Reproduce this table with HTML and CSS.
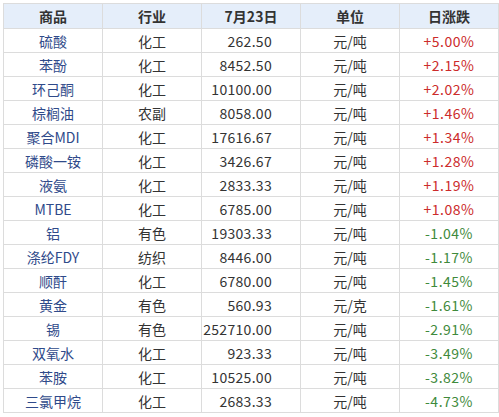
FILE: index.html
```html
<!DOCTYPE html>
<html>
<head>
<meta charset="utf-8">
<link rel="stylesheet" href="styles.css">
</head>
<body>
<table class="tbl">
<thead>
<tr><th>商品</th><th>行业</th><th>7月23日</th><th>单位</th><th>日涨跌</th></tr>
</thead>
<tbody>
<tr><td class="name">硫酸</td><td>化工</td><td class="num">262.50</td><td>元/吨</td><td class="up">+5.00%</td></tr>
<tr><td class="name">苯酚</td><td>化工</td><td class="num">8452.50</td><td>元/吨</td><td class="up">+2.15%</td></tr>
<tr><td class="name">环己酮</td><td>化工</td><td class="num">10100.00</td><td>元/吨</td><td class="up">+2.02%</td></tr>
<tr><td class="name">棕榈油</td><td>农副</td><td class="num">8058.00</td><td>元/吨</td><td class="up">+1.46%</td></tr>
<tr><td class="name">聚合MDI</td><td>化工</td><td class="num">17616.67</td><td>元/吨</td><td class="up">+1.34%</td></tr>
<tr><td class="name">磷酸一铵</td><td>化工</td><td class="num">3426.67</td><td>元/吨</td><td class="up">+1.28%</td></tr>
<tr><td class="name">液氨</td><td>化工</td><td class="num">2833.33</td><td>元/吨</td><td class="up">+1.19%</td></tr>
<tr><td class="name">MTBE</td><td>化工</td><td class="num">6785.00</td><td>元/吨</td><td class="up">+1.08%</td></tr>
<tr><td class="name">铝</td><td>有色</td><td class="num">19303.33</td><td>元/吨</td><td class="down">-1.04%</td></tr>
<tr><td class="name">涤纶FDY</td><td>纺织</td><td class="num">8446.00</td><td>元/吨</td><td class="down">-1.17%</td></tr>
<tr><td class="name">顺酐</td><td>化工</td><td class="num">6780.00</td><td>元/吨</td><td class="down">-1.45%</td></tr>
<tr><td class="name">黄金</td><td>有色</td><td class="num">560.93</td><td>元/克</td><td class="down">-1.61%</td></tr>
<tr><td class="name">锡</td><td>有色</td><td class="num">252710.00</td><td>元/吨</td><td class="down">-2.91%</td></tr>
<tr><td class="name">双氧水</td><td>化工</td><td class="num">923.33</td><td>元/吨</td><td class="down">-3.49%</td></tr>
<tr><td class="name">苯胺</td><td>化工</td><td class="num">10525.00</td><td>元/吨</td><td class="down">-3.82%</td></tr>
<tr><td class="name">三氯甲烷</td><td>化工</td><td class="num">2683.33</td><td>元/吨</td><td class="down">-4.73%</td></tr>
</tbody>
</table>
</body>
</html>
```

FILE: styles.css
```css
html, body {
  margin: 0;
  padding: 0;
  background: #ffffff;
}
body {
  padding: 3px 0 0 3px;
  font-family: "Noto Sans CJK SC", "Noto Sans", sans-serif;
  font-size: 14px;
  color: #333333;
}
.tbl {
  border-collapse: collapse;
  table-layout: fixed;
  width: 494px;
}
.tbl th, .tbl td {
  border: 1px solid #dcdcdc;
  padding: 0;
  text-align: center;
  width: 98px;
  line-height: 22px;
  height: 23px;
  white-space: nowrap;
}
.tbl th {
  background: #e5eefa;
  font-weight: bold;
  color: #333333;
  height: 24px;
}
.tbl td.name {
  color: #2f4a8a;
}
.tbl td.num {
  text-align: right;
  padding-right: 28px;
  letter-spacing: 0.3px;
}
.tbl td.up {
  color: #cc2b2b;
  letter-spacing: 0.5px;
}
.tbl td.down {
  color: #3f8a3c;
  letter-spacing: 0.5px;
}
```
